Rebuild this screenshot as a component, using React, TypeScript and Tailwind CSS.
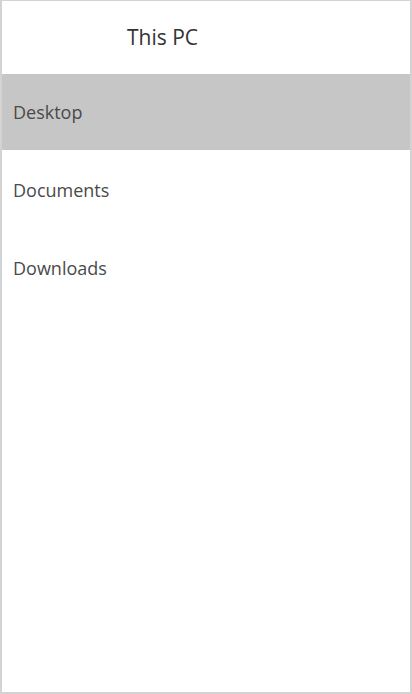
import React from 'react';

const folders = ['Desktop', 'Documents', 'Downloads'];

export default function App() {
  const [selected, setSelected] = React.useState('Desktop');

  return (
    <div
      className="h-[694px] w-[412px] bg-white border-t border-x-2 border-b-2 border-[#d3d3d3] flex flex-col"
      style={{ fontFamily: '"Open Sans", "Noto Sans", sans-serif' }}
    >
      <div className="h-[73px] shrink-0 flex items-center">
        <span className="ml-[125px] text-[21px] text-[#333]">This PC</span>
      </div>
      <div className="flex flex-col gap-[2px]">
        {folders.map((name) => (
          <button
            key={name}
            onClick={() => setSelected(name)}
            className={`h-[76px] flex items-center pl-[11px] text-left text-[18px] text-[#4a4a4a] ${
              selected === name ? 'bg-[#c6c6c6]' : 'bg-white'
            }`}
          >
            {name}
          </button>
        ))}
      </div>
    </div>
  );
}
